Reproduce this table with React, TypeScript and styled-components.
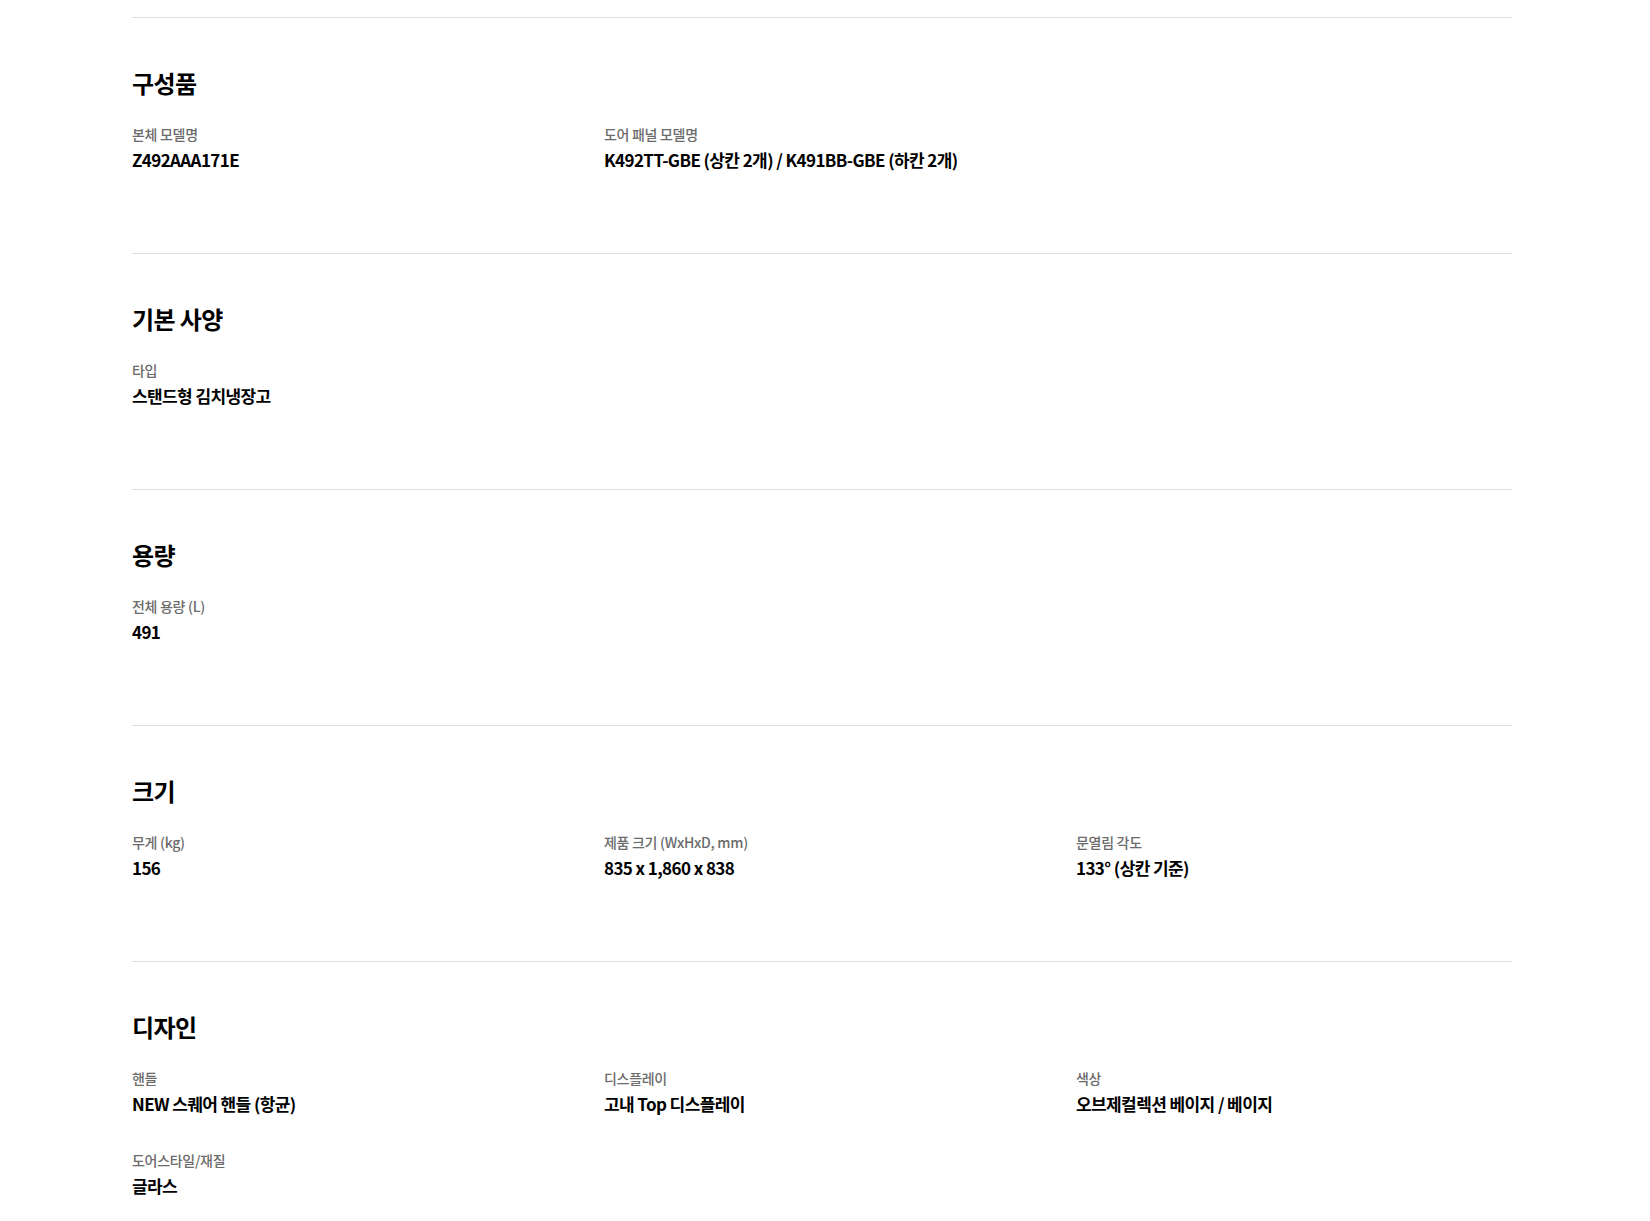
import React from "react";
import styled, { createGlobalStyle } from "styled-components";

const GlobalStyle = createGlobalStyle`
  html, body {
    margin: 0;
    padding: 0;
    background: #ffffff;
  }
  body {
    font-family: "Noto Sans CJK KR", "Noto Sans", sans-serif;
    color: #000000;
  }
`;

const Page = styled.main`
  padding: 17px 138px 0 132px;
`;

const Section = styled.section`
  border-top: 1px solid #dddddd;
  padding: 47px 0 81px;
  &:last-child {
    padding-bottom: 24px;
  }
`;

const Title = styled.h2`
  margin: 0;
  font-size: 24px;
  line-height: 36px;
  font-weight: 700;
  letter-spacing: -0.6px;
  color: #000000;
`;

const Grid = styled.dl`
  margin: 23px 0 0;
  display: grid;
  grid-template-columns: repeat(3, 1fr);
  column-gap: 36px;
  row-gap: 34px;
`;

const Item = styled.div`
  display: flex;
  flex-direction: column;
  gap: 4px;
`;

const Label = styled.dt`
  margin: 0;
  font-size: 14px;
  line-height: 20px;
  font-weight: 500;
  color: #6b6b6b;
  letter-spacing: -0.3px;
`;

const Value = styled.dd`
  margin: 0;
  font-size: 17px;
  line-height: 24px;
  font-weight: 700;
  color: #000000;
  letter-spacing: -0.6px;
`;

type Spec = { label: string; value: string };
type Group = { title: string; specs: Spec[] };

const groups: Group[] = [
  {
    title: "구성품",
    specs: [
      { label: "본체 모델명", value: "Z492AAA171E" },
      { label: "도어 패널 모델명", value: "K492TT-GBE (상칸 2개) / K491BB-GBE (하칸 2개)" },
    ],
  },
  {
    title: "기본 사양",
    specs: [{ label: "타입", value: "스탠드형 김치냉장고" }],
  },
  {
    title: "용량",
    specs: [{ label: "전체 용량 (L)", value: "491" }],
  },
  {
    title: "크기",
    specs: [
      { label: "무게 (kg)", value: "156" },
      { label: "제품 크기 (WxHxD, mm)", value: "835 x 1,860 x 838" },
      { label: "문열림 각도", value: "133° (상칸 기준)" },
    ],
  },
  {
    title: "디자인",
    specs: [
      { label: "핸들", value: "NEW 스퀘어 핸들 (항균)" },
      { label: "디스플레이", value: "고내 Top 디스플레이" },
      { label: "색상", value: "오브제컬렉션 베이지 / 베이지" },
      { label: "도어스타일/재질", value: "글라스" },
    ],
  },
];

export default function App() {
  return (
    <>
      <GlobalStyle />
      <Page>
        {groups.map((g) => (
          <Section key={g.title}>
            <Title>{g.title}</Title>
            <Grid>
              {g.specs.map((s) => (
                <Item key={s.label}>
                  <Label>{s.label}</Label>
                  <Value>{s.value}</Value>
                </Item>
              ))}
            </Grid>
          </Section>
        ))}
      </Page>
    </>
  );
}
